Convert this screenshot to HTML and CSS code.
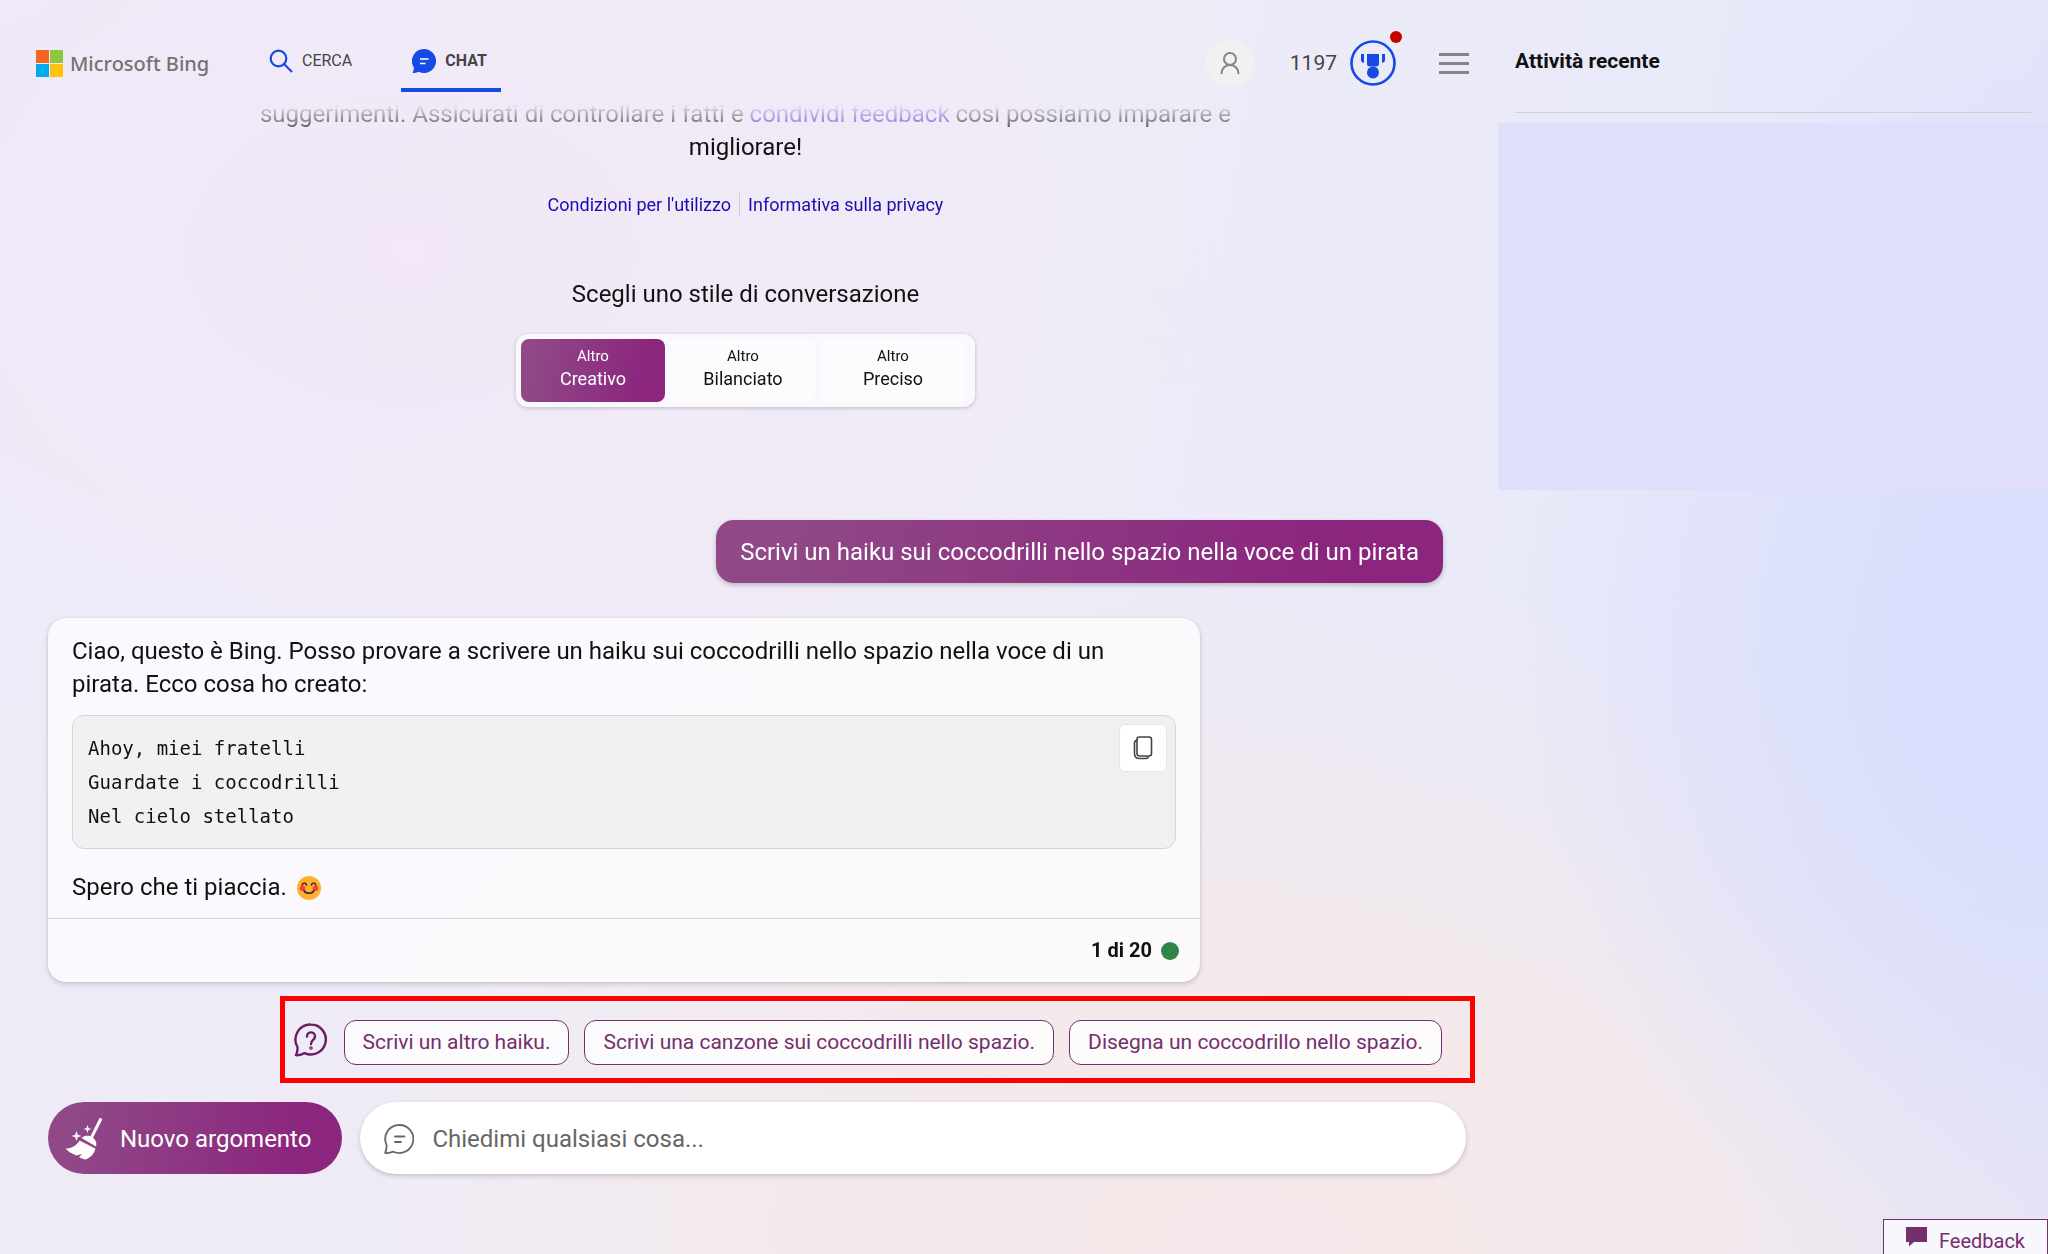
FILE: index.html
```html
<!DOCTYPE html>
<html lang="it">
<head>
    <meta charset="UTF-8">
    <meta name="viewport" content="width=device-width, initial-scale=1.0">
    <title>Microsoft Bing</title>
    <link rel="stylesheet" href="styles.css">
</head>
<body>
    <main class="main">
        <header class="header">
            <a href="#" class="logo">
                <svg width="27" height="27" viewBox="0 0 27 27">
                    <rect width="13" height="13" fill="#f46523"/>
                    <rect x="14" width="13" height="13" fill="#8dc63f"/>
                    <rect y="14" width="13" height="13" fill="#00adef"/>
                    <rect x="14" y="14" width="13" height="13" fill="#ffc20e"/>
                </svg>
                <span>Microsoft Bing</span>
            </a>
            <nav class="nav">
                <a href="#" class="nav-link">
                    <svg width="24" height="24" viewBox="0 0 24 24" fill="none" stroke="#174ae4" stroke-width="2.2">
                        <circle cx="9.5" cy="9.5" r="7.8"/>
                        <path d="M15 15l8 8"/>
                    </svg>
                    <span>CERCA</span>
                </a>
                <a href="#" class="nav-link active">
                    <svg width="24" height="24" viewBox="0 0 24 24">
                        <path d="M12 0a12 12 0 1 1-5.2 22.8C5 23.6 2.6 24 .6 24c.7-1.700 1.200-3.300 1.200-5.600A12 12 0 0 1 12 0z" fill="#174ae4"/>
                        <path d="M8 10h8.500M8 14.500h5.500" stroke="#fff" stroke-width="1.500" fill="none"/>
                    </svg>
                    <span>CHAT</span>
                </a>
            </nav>
            <div class="account">
                <a href="#" class="avatar" aria-label="Account">
                    <svg width="22" height="24" viewBox="0 0 22 24" fill="none" stroke="#85868a" stroke-width="2">
                        <circle cx="11" cy="8" r="6"/>
                        <path d="M2.500 23c0-5.500 3.500-9 8.500-9s8.500 3.500 8.500 9"/>
                    </svg>
                </a>
                <a href="#" class="rewards">
                    <span>1197</span>
                    <span class="medal">
                        <svg width="46" height="46" viewBox="0 0 46 46" fill="#174ae4">
                            <circle cx="23" cy="23" r="21.500" fill="none" stroke="#174ae4" stroke-width="2.600"/>
                            <path d="M17 14h12v10c0 1.700-1.300 2.500-3 2.500h-6c-1.700 0-3-.8-3-2.500z"/>
                            <path d="M11 14h3v9c-2-.4-3-1.500-3-3.300zM32 14h3v5.700c0 1.800-1 2.900-3 3.300z"/>
                            <circle cx="23" cy="32.500" r="6"/>
                        </svg>
                        <span class="dot"></span>
                    </span>
                </a>
                <button class="menu" aria-label="Menu"><span></span><span></span><span></span></button>
            </div>
        </header>

        <!-- Conversation -->
        <section class="chat">
            <p class="intro">suggerimenti. Assicurati di controllare i fatti e <a href="#">condividi feedback</a> così possiamo imparare e migliorare!</p>
            <div class="legal">
                <a href="#">Condizioni per l'utilizzo</a>
                <a href="#">Informativa sulla privacy</a>
            </div>

            <h2 class="tone-title">Scegli uno stile di conversazione</h2>
            <div class="tones">
                <button class="tone selected"><small>Altro</small>Creativo</button>
                <button class="tone"><small>Altro</small>Bilanciato</button>
                <button class="tone"><small>Altro</small>Preciso</button>
            </div>

            <div class="message-user">Scrivi un haiku sui coccodrilli nello spazio nella voce di un pirata</div>

            <article class="message-bot">
                <div class="message-body">
                    <p>Ciao, questo è Bing. Posso provare a scrivere un haiku sui coccodrilli nello spazio nella voce di un pirata. Ecco cosa ho creato:</p>
                    <div class="code">
<pre>Ahoy, miei fratelli
Guardate i coccodrilli
Nel cielo stellato</pre>
                        <button class="copy" aria-label="Copia">
                            <svg width="20" height="24" viewBox="0 0 20 24" fill="none" stroke="#444" stroke-width="1.600">
                                <rect x="4" y="1" width="14.500" height="19" rx="2.500"/>
                                <path d="M4 4c-1.500.5-2.500 1.500-2.500 3v10.500c0 3 2 5 5 5H13c1.300 0 2-.7 2.500-2"/>
                            </svg>
                        </button>
                    </div>
                    <p class="closing">Spero che ti piaccia.
                        <svg width="24" height="24" viewBox="0 0 24 24">
                            <circle cx="12" cy="12" r="12" fill="#ffb02e"/>
                            <circle cx="5.500" cy="12.300" r="2.700" fill="#ff3b3b"/>
                            <circle cx="18.500" cy="12.300" r="2.700" fill="#ff3b3b"/>
                            <path d="M5.200 9c.5-2.700 3.800-2.700 4.300 0M14.500 9c.5-2.700 3.800-2.700 4.300 0M7 14.500c2 3.700 8 3.700 10 0" fill="none" stroke="#402a32" stroke-width="1.600" stroke-linecap="round"/>
                        </svg>
                    </p>
                </div>
                <footer class="message-footer">1 di 20 <span class="status"></span></footer>
            </article>
        </section>

        <!-- Suggested replies -->
        <div class="suggestions">
            <svg width="34" height="34" viewBox="0 0 34 34" fill="none" stroke="#6b1f63" stroke-width="2.400" stroke-linecap="round" stroke-linejoin="round">
                <path d="M17 1.500a15 15 0 1 1-6.500 28.600c-2.500 1.600-5.500 2.400-8.500 2 1.300-2.700 1.800-5 1.500-8.100A15 15 0 0 1 17 1.500z"/>
                <path d="M13 13.500c0-5.500 8-5.500 8 0 0 3.500-4 3.500-4 7.500"/>
                <circle cx="17" cy="25" r=".6"/>
            </svg>
            <div class="chips">
                <button class="chip">Scrivi un altro haiku.</button>
                <button class="chip">Scrivi una canzone sui coccodrilli nello spazio.</button>
                <button class="chip">Disegna un coccodrillo nello spazio.</button>
            </div>
        </div>

        <div class="composer">
            <button class="new-topic">
                <svg width="38" height="42" viewBox="0 0 38 42" fill="#fff">
                    <path d="M35.500 1.500L26 20.500" stroke="#fff" stroke-width="3" stroke-linecap="round"/>
                    <path d="M16.500 20c3.500-3 7.500-2.500 10.500-.8 3.500 2 5 5.300 4 9.300z"/>
                    <path d="M14.700 22.500L30.500 30.800c-1.500 5-4.500 8.600-9.500 10.700-2.800-.3-5-1.200-7-2.500l3-3-5.500 1.500C6.500 35.500 3 33.500.5 30.500c6 0 10.500-2.500 14.200-8z"/>
                    <path d="M22.500 7l1 3 3 1-3 1-1 3-1-3-3-1 3-1zM11.500 13l1.300 3.700 3.700 1.300-3.700 1.300-1.300 3.700-1.300-3.700L6.500 18l3.700-1.300z"/>
                </svg>
                <span>Nuovo argomento</span>
            </button>
            <div class="ask">
                <label for="ask">
                    <svg width="30" height="30" viewBox="0 0 30 30" fill="none" stroke="#666" stroke-width="1.800" stroke-linecap="round" stroke-linejoin="round">
                        <path d="M15.500 1a14 14 0 1 1-6 26.700C7 28.600 4 29.200 1.200 29c1-2.700 1.600-5.500 1.300-8.200A14 14 0 0 1 15.500 1z"/>
                        <path d="M11 12.500h9.500M11 18h6"/>
                    </svg>
                </label>
                <input type="text" id="ask" placeholder="Chiedimi qualsiasi cosa...">
            </div>
        </div>
    </main>

    <aside class="sidebar">
        <h2>Attività recente</h2>
        <div class="recent"></div>
    </aside>

    <button class="feedback">
        <svg width="21" height="20" viewBox="0 0 21 20" fill="#742f6e"><path d="M0 0h21v15H8l-5 4.500V15H0z"/></svg>
        <span>Feedback</span>
    </button>
</body>
</html>
```

FILE: styles.css
```css
* {
    box-sizing: border-box;
}

body {
    display: flex;
    min-height: 100vh;
    margin: 0;
    overflow: hidden;
    color: #111;
    font-family: Roboto, "Liberation Sans", sans-serif;
    font-size: 24px;
    line-height: 33px;
    background:
        radial-gradient(ellipse 26% 52% at 100% 52%, #d9defd 0%, #d9defd 20%, rgba(217, 222, 253, 0) 100%),
        radial-gradient(ellipse 48% 55% at 62% 100%, #f5e8ea 0%, #f4e9ea 30%, rgba(244, 233, 234, 0) 100%),
        radial-gradient(ellipse 40% 45% at 20% 20%, #f2e8f7 0%, rgba(242, 232, 247, 0) 100%),
        linear-gradient(100deg, #eeebf8 0%, #efecf6 45%, #e8e9f9 75%, #e2e2f8 100%);
}

h2, p, pre {
    margin: 0;
    font-weight: 400;
}

h2 {
    font-size: 24px;
}

a {
    color: #1a0dab;
    text-decoration: none;
}

button, input {
    border: none;
    padding: 0;
    font: inherit;
    color: inherit;
    background: none;
}

button {
    cursor: pointer;
}

svg {
    display: block;
    flex-shrink: 0;
}

.main {
    flex: 1;
    display: flex;
    flex-direction: column;
    min-width: 0;
}

/* Header */
.header {
    display: flex;
    height: 92px;
    padding: 0 29px 0 36px;
}

.logo, .account {
    display: flex;
    align-items: center;
    padding-top: 34px;
}

.logo {
    gap: 7px;
    width: 233px;
    color: #737373;
    font-family: "Noto Sans", "Open Sans", sans-serif;
    font-size: 20px;
    font-weight: 500;
}

.nav {
    display: flex;
    gap: 49px;
}

.nav-link {
    display: flex;
    align-items: center;
    gap: 9px;
    padding-top: 33px;
    border-bottom: 4px solid transparent;
    color: #444;
    font-size: 16px;
}

.nav-link.active {
    padding-left: 11px;
    padding-right: 14px;
    border-color: #174ae4;
    font-weight: 700;
}

.account {
    margin-left: auto;
}

.avatar {
    display: flex;
    align-items: center;
    justify-content: center;
    width: 48px;
    height: 48px;
    margin-right: 36px;
    border-radius: 50%;
    background: #f1f1f1;
}

.rewards {
    display: flex;
    align-items: center;
    gap: 13px;
    color: #444;
    font-size: 21px;
}

.medal {
    position: relative;
}

.dot {
    position: absolute;
    top: -9px;
    right: -6px;
    width: 12px;
    height: 12px;
    border-radius: 50%;
    background: #c80000;
}

.menu {
    display: flex;
    flex-direction: column;
    gap: 6px;
    width: 30px;
    margin-left: 43px;
}

.menu span {
    height: 3px;
    background: #858585;
}

/* Chat */
.chat {
    display: flex;
    flex-direction: column;
    align-items: center;
    padding: 6px 55px 0 48px;
    -webkit-mask-image: linear-gradient(transparent 12px, #000 48px);
    mask-image: linear-gradient(transparent 12px, #000 48px);
}

.intro {
    max-width: 1000px;
    text-align: center;
}

.intro a {
    color: #4a1fd0;
}

.legal {
    display: flex;
    margin-top: 29px;
    font-size: 18px;
    line-height: 24px;
}

.legal a + a {
    margin-left: 8px;
    padding-left: 8px;
    border-left: 1px solid #cfcad8;
}

.tone-title {
    margin-top: 61px;
}

.tones {
    display: flex;
    gap: 6px;
    margin-top: 23px;
    padding: 5px 10px 5px 5px;
    border-radius: 12px;
    background: #f9f8fc;
    box-shadow: 0 1px 4px rgba(0, 0, 0, 0.2);
}

.tone {
    width: 144px;
    height: 63px;
    padding-bottom: 4px;
    border-radius: 8px;
    background: #fcfcfe;
    font-size: 18px;
    line-height: 24px;
}

.tone small {
    display: block;
    font-size: 15px;
    line-height: 21px;
}

.tone.selected, .message-user, .new-topic {
    color: #fff;
    background: linear-gradient(100deg, #904887 10%, #8b257e 85%);
}

.message-user {
    align-self: flex-end;
    margin-top: 113px;
    padding: 16px 24px 14px;
    border-radius: 18px;
    box-shadow: 0 2px 5px rgba(0, 0, 0, 0.22);
}

.message-bot {
    align-self: flex-start;
    width: 1152px;
    max-width: 100%;
    margin: 35px 0 14px;
    border-radius: 18px;
    background: rgba(255, 255, 255, 0.7);
    box-shadow: 0 0 1px rgba(0, 0, 0, 0.25), 0 2px 5px rgba(0, 0, 0, 0.18);
}

.message-body {
    padding: 17px 24px 14px;
}

.code {
    display: flex;
    justify-content: space-between;
    margin-top: 14px;
    padding: 8px 8px 8px 15px;
    border: 1px solid #d5d4d8;
    border-radius: 12px;
    background: rgba(236, 236, 236, 0.7);
}

.code pre {
    padding: 7px 0;
    font-family: "DejaVu Sans Mono", monospace;
    font-size: 19px;
    line-height: 34px;
}

.copy {
    display: flex;
    align-items: center;
    justify-content: center;
    width: 48px;
    height: 48px;
    border: 1px solid #e4e4e6;
    border-radius: 6px;
    background: #fff;
}

.closing {
    display: flex;
    align-items: center;
    gap: 10px;
    margin-top: 22px;
}

.message-footer {
    display: flex;
    align-items: center;
    justify-content: flex-end;
    gap: 9px;
    height: 64px;
    padding-right: 21px;
    border-top: 1px solid #d9d8dd;
    font-size: 20px;
    font-weight: 700;
}

.status {
    width: 18px;
    height: 18px;
    border-radius: 50%;
    background: #2d8548;
}

/* Suggestions and input */
.suggestions {
    display: flex;
    align-self: flex-end;
    gap: 16px;
    margin-right: 23px;
    padding: 19px 28px 13px 9px;
    border: 5px solid #f00;
}

.suggestions svg {
    margin-top: 3px;
}

.chips {
    display: flex;
    gap: 15px;
}

.chip {
    height: 45px;
    padding: 0 18px;
    border: 1px solid #742f6e;
    border-radius: 12px;
    background: rgba(255, 255, 255, 0.8);
    color: #742f6e;
    font-size: 21px;
}

.composer {
    display: flex;
    gap: 18px;
    padding: 19px 32px 80px 48px;
}

.new-topic {
    display: flex;
    align-items: center;
    gap: 17px;
    height: 72px;
    padding: 2px 31px 0 17px;
    border-radius: 36px;
}

.ask {
    flex: 1;
    display: flex;
    align-items: center;
    gap: 18px;
    height: 72px;
    padding: 2px 24px 0;
    border-radius: 36px;
    background: #fff;
    box-shadow: 0 2px 5px rgba(0, 0, 0, 0.18);
}

.ask input {
    flex: 1;
    outline: none;
}

.ask input::placeholder {
    color: #666;
    opacity: 1;
}

/* Sidebar */
.sidebar {
    width: 550px;
}

.sidebar h2 {
    margin: 0 17px 10px;
    padding: 45px 0 34px;
    border-bottom: 1px solid #cfcede;
    font-size: 21px;
    font-weight: 700;
}

.recent {
    height: 367px;
    background: #dfdffb;
}

.feedback {
    position: fixed;
    right: 0;
    bottom: 0;
    display: flex;
    gap: 12px;
    height: 35px;
    padding: 7px 22px 0;
    border: 1px solid #742f6e;
    border-bottom: none;
    background: #f8f7fd;
    color: #742f6e;
    font-size: 20px;
    line-height: 28px;
}
```
